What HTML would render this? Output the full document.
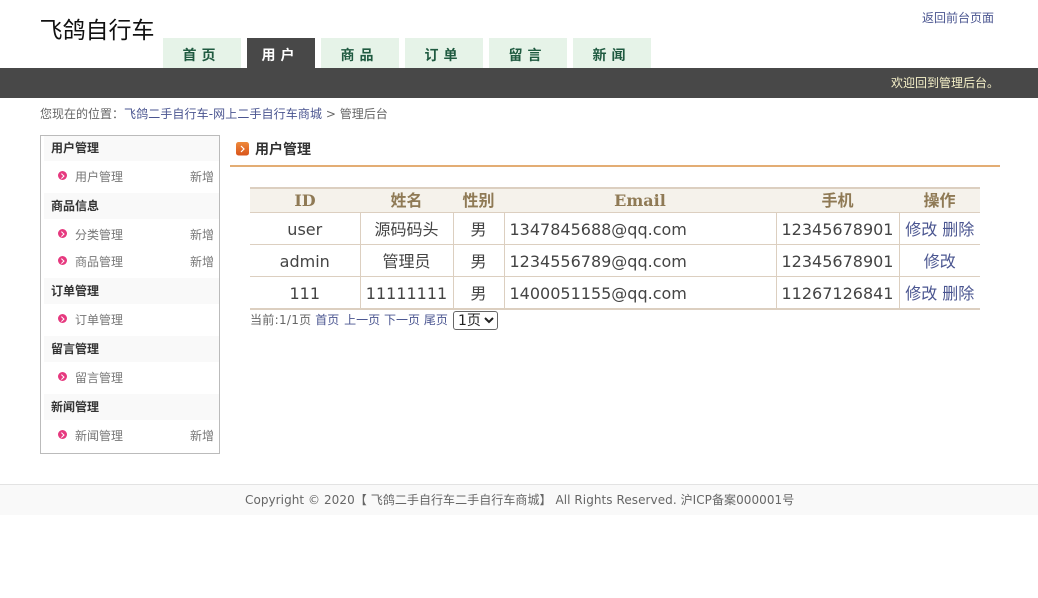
<!DOCTYPE html>
<html lang="zh"><head><meta charset="utf-8"><title>用户管理</title>
<style>
html,body{margin:0;padding:0;background:#fff;width:1038px;height:598px;overflow:hidden}
body{font:12px "DejaVu Sans","Noto Sans CJK SC",sans-serif;color:#555;position:relative}
.a{position:absolute;white-space:nowrap}
a{color:#4a5590;text-decoration:none}
.tab{position:absolute;top:38px;height:30px;width:78px;background:#e6f3e8;color:#1f5a40;font-weight:bold;font-size:14px;line-height:36px;text-align:center;letter-spacing:5px;text-indent:-1px}
.tab.on{background:#484848;color:#fff;top:38px;width:68px}
.box{position:absolute;left:40px;top:135px;width:178px;height:317px;border:1px solid #bbb}
.h{position:absolute;left:3px;width:175px;height:26px;margin-top:-1px;background:#f9f9f9;font-weight:bold;color:#333;line-height:26px;text-indent:7px}
.i{position:absolute;left:34px;margin-top:-1px;color:#777;line-height:16px}
.n{position:absolute;right:5px;margin-top:-1px;color:#777;line-height:16px}
.d{position:absolute;left:17px;margin-top:-1px;width:9px;height:9px;border-radius:50%;background:#e6397f}
.d:after{content:"";position:absolute;left:1.5px;top:2.5px;width:2.5px;height:2.5px;border:solid #fff;border-width:1.5px 1.5px 0 0;transform:rotate(45deg)}
table{position:absolute;left:250px;top:187px;width:730px;border-collapse:collapse;table-layout:fixed;font-size:16px;color:#444;border-top:2px solid #dccfc0;border-bottom:2px solid #dccfc0}
th{height:23px;padding:0;background:#f5f2eb;color:#8f7a55;font:bold 16px/20px "DejaVu Serif","Noto Sans CJK SC",serif;border-bottom:1px solid #dccfc0}
td{height:29px;padding:2px 0 0;text-align:center;border-bottom:1px solid #dccfc0;border-left:1px solid #dccfc0;line-height:20px}
td:first-child{border-left:0}
tr:last-child td{border-bottom:0}
td.l{text-align:left;padding:2px 0 0 5px}
</style></head><body>
<div class="a" style="left:39.5px;top:16px;font-size:23px;line-height:30px;color:#111">飞鸽自行车</div>
<a class="a" style="left:922px;top:10px;line-height:16px" href="#">返回前台页面</a>
<div class="tab" style="left:163px">首页</div>
<div class="tab on" style="left:247px">用户</div>
<div class="tab" style="left:321px">商品</div>
<div class="tab" style="left:405px">订单</div>
<div class="tab" style="left:489px">留言</div>
<div class="tab" style="left:573px">新闻</div>
<div class="a" style="left:0;top:68px;width:1038px;height:30px;background:#484848"></div>
<div class="a" style="left:891px;top:75px;line-height:16px;color:#f5f0c8">欢迎回到管理后台。</div>
<div class="a" style="left:40px;top:106px;line-height:16px;color:#666">您现在的位置：<a href="#" style="letter-spacing:.1px">飞鸽二手自行车-网上二手自行车商城</a> &gt; 管理后台</div>

<div class="box">
<div class="h" style="top:1px;height:25px;line-height:24px">用户管理</div><i class="d" style="top:36px"></i><div class="i" style="top:34px">用户管理</div><div class="n" style="top:34px">新增</div>
<div class="h" style="top:58px">商品信息</div><i class="d" style="top:94px"></i><div class="i" style="top:92px">分类管理</div><div class="n" style="top:92px">新增</div>
<i class="d" style="top:121px"></i><div class="i" style="top:119px">商品管理</div><div class="n" style="top:119px">新增</div>
<div class="h" style="top:143px">订单管理</div><i class="d" style="top:179px"></i><div class="i" style="top:177px">订单管理</div>
<div class="h" style="top:201px">留言管理</div><i class="d" style="top:237px"></i><div class="i" style="top:235px">留言管理</div>
<div class="h" style="top:259px">新闻管理</div><i class="d" style="top:295px"></i><div class="i" style="top:293px">新闻管理</div><div class="n" style="top:293px">新增</div>
</div>

<svg class="a" style="left:236px;top:142px" width="13" height="14" viewBox="0 0 13 14"><defs><linearGradient id="g" x1="0" y1="0" x2="0" y2="1"><stop offset="0" stop-color="#ee8a3c"/><stop offset="1" stop-color="#d9541a"/></linearGradient></defs><rect width="13" height="13.5" rx="2.5" fill="url(#g)"/><path d="M5 4l3 3-3 3" fill="none" stroke="#fff" stroke-width="1.2"/></svg>
<div class="a" style="left:255px;top:141px;line-height:18px;font-size:14px;font-weight:bold;color:#333">用户管理</div>
<div class="a" style="left:230px;top:165px;width:770px;height:2px;background:#e3ad74"></div>

<table>
<colgroup><col style="width:110px"><col style="width:93px"><col style="width:51px"><col style="width:272px"><col style="width:123px"><col style="width:81px"></colgroup>
<tr><th>ID</th><th>姓名</th><th>性别</th><th>Email</th><th>手机</th><th>操作</th></tr>
<tr><td>user</td><td>源码码头</td><td>男</td><td class="l">1347845688@qq.com</td><td class="l">12345678901</td><td><a href="#">修改</a> <a href="#">删除</a></td></tr>
<tr><td>admin</td><td>管理员</td><td>男</td><td class="l">1234556789@qq.com</td><td class="l">12345678901</td><td><a href="#">修改</a></td></tr>
<tr><td>111</td><td>11111111</td><td>男</td><td class="l">1400051155@qq.com</td><td class="l">11267126841</td><td><a href="#">修改</a> <a href="#">删除</a></td></tr>
</table>

<div class="a" style="left:250px;top:312px;line-height:16px;color:#666"><span style="letter-spacing:.3px">当前:1/1页</span>&nbsp;<a href="#">首页</a> <a href="#" style="margin-left:1px">上一页</a> <a href="#">下一页</a> <a href="#">尾页</a></div>
<select class="a" style="left:453px;top:311px;width:45px;height:19px;padding:0;font:14px 'DejaVu Sans','Noto Sans CJK SC',sans-serif;color:#222;background:#fff;border:1px solid #666;border-radius:3px"><option>1页</option></select>

<div class="a" style="left:0;top:484px;width:1038px;height:30px;background:#f9f9f9;border-top:1px solid #e3e3e3"></div>
<div class="a" style="left:245px;top:492px;line-height:16px;color:#666;letter-spacing:.06px">Copyright © 2020【 飞鸽二手自行车二手自行车商城】 All Rights Reserved. 沪ICP备案000001号</div>
</body></html>
